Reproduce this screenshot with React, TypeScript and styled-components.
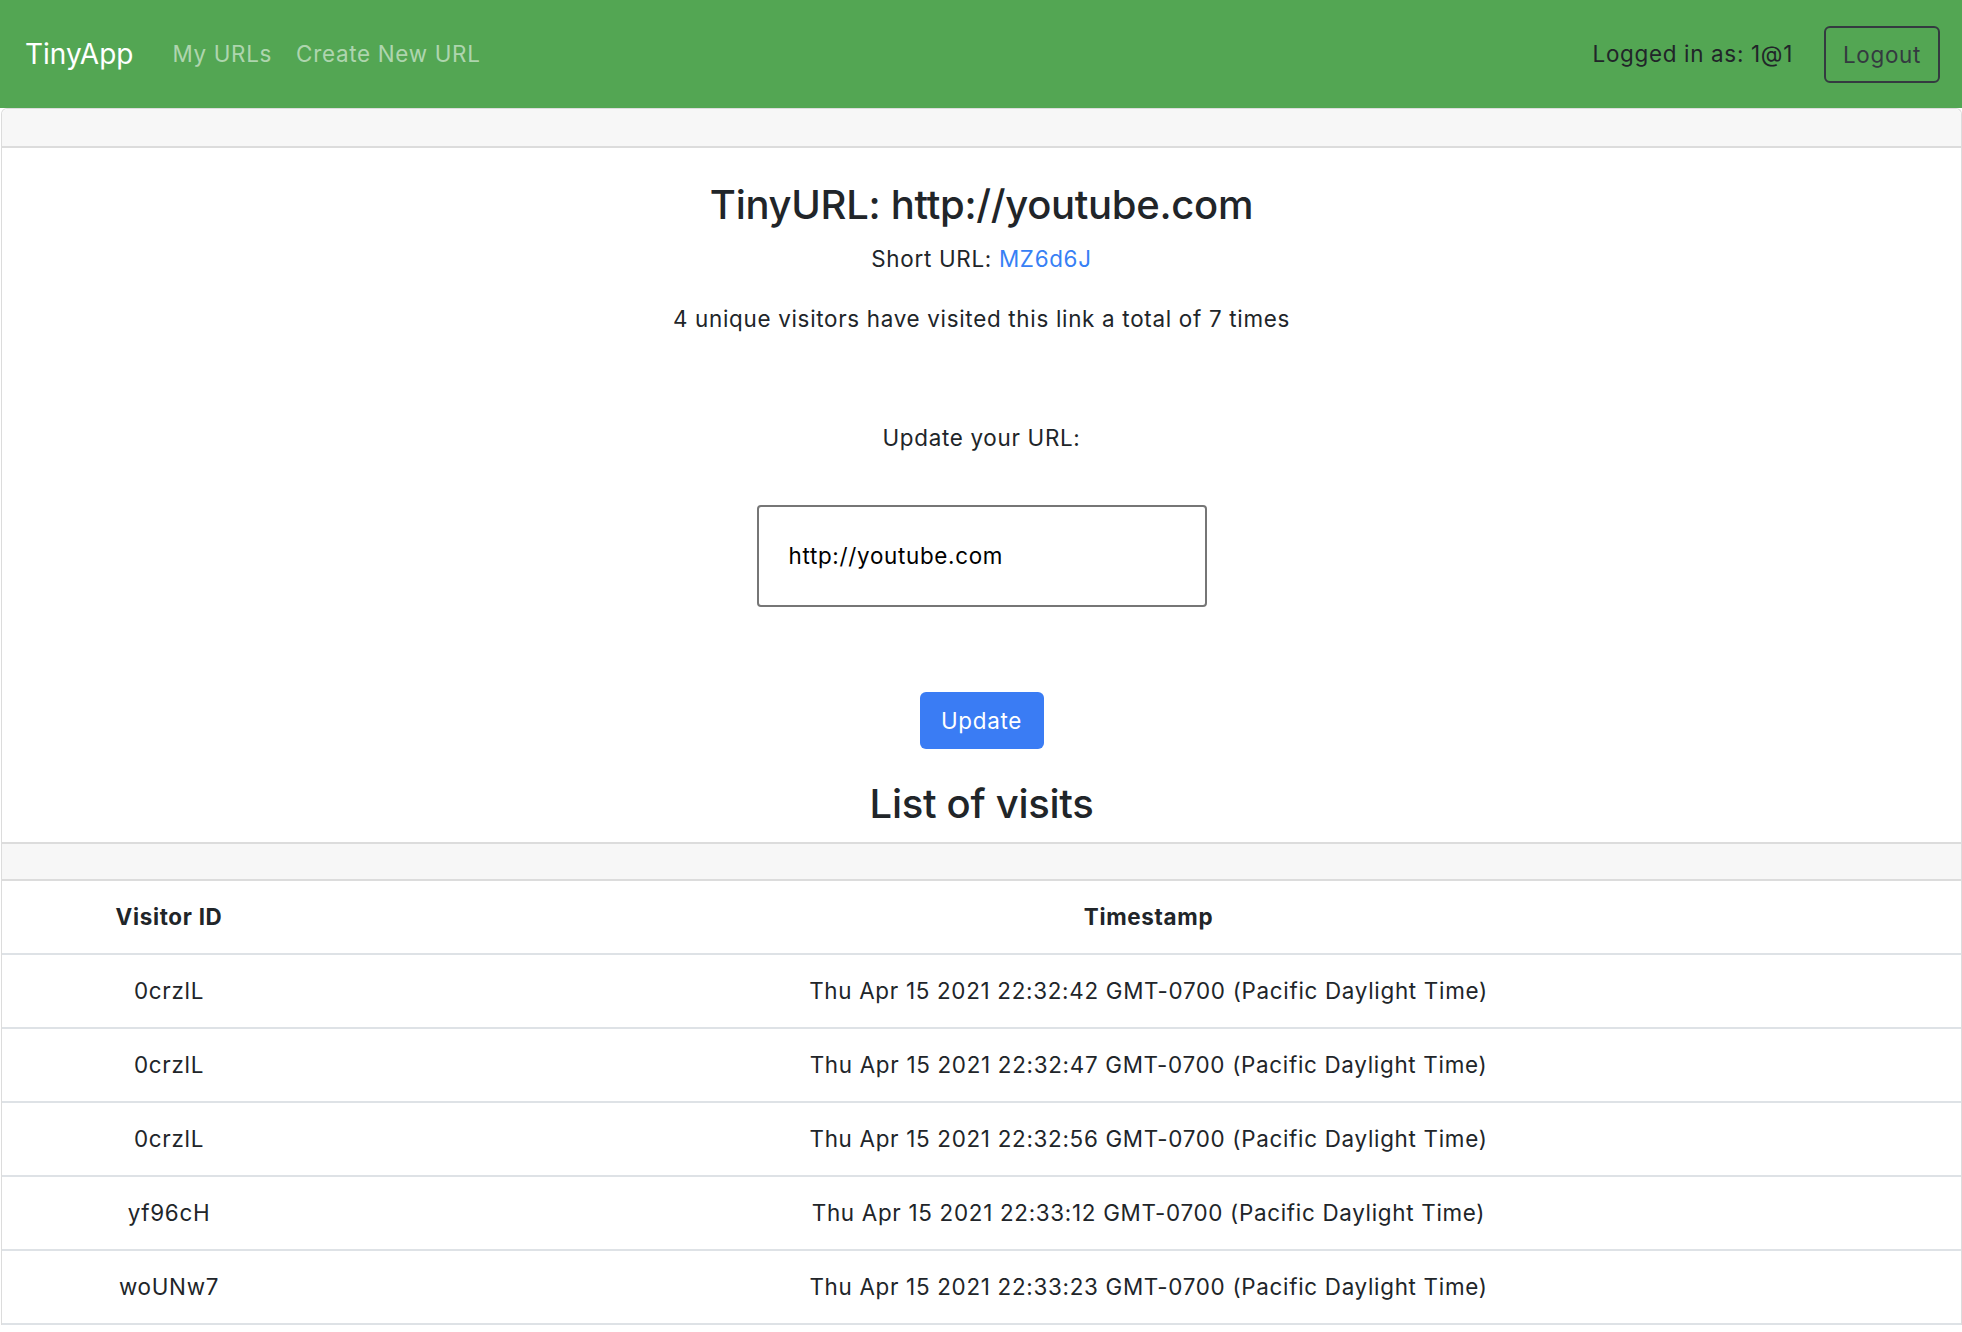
import React from "react";
import styled, { createGlobalStyle } from "styled-components";

const GlobalStyle = createGlobalStyle`
  * { box-sizing: border-box; }
  html, body {
    margin: 0;
    padding: 0;
    background: #ffffff;
    font-family: Inter, "Noto Sans", sans-serif;
    font-size: 22.4px;
    line-height: 1.5;
    letter-spacing: 0.7px;
    color: #212529;
  }
`;

interface visit {
  id: string,
  time: string
}

const visits: visit[] = [
  { id: "0crzlL", time: "Thu Apr 15 2021 22:32:42 GMT-0700 (Pacific Daylight Time)" },
  { id: "0crzlL", time: "Thu Apr 15 2021 22:32:47 GMT-0700 (Pacific Daylight Time)" },
  { id: "0crzlL", time: "Thu Apr 15 2021 22:32:56 GMT-0700 (Pacific Daylight Time)" },
  { id: "yf96cH", time: "Thu Apr 15 2021 22:33:12 GMT-0700 (Pacific Daylight Time)" },
  { id: "woUNw7", time: "Thu Apr 15 2021 22:33:23 GMT-0700 (Pacific Daylight Time)" },
];

export default function App () {
  return (
    <>
      <GlobalStyle />
      <NavBar>
        <Brand href="#">TinyApp</Brand>
        <NavLinks>
          <NavLink href="#">My URLs</NavLink>
          <NavLink href="#">Create New URL</NavLink>
        </NavLinks>
        <NavRight>
          <LoggedIn>Logged in as: 1@1</LoggedIn>
          <LogoutButton>Logout</LogoutButton>
        </NavRight>
      </NavBar>

      <Card>
        <CardHeader first />
        <CardBody>
          <Title>TinyURL: http://youtube.com</Title>
          <ShortLine>Short URL: <ShortLink href="#">MZ6d6J</ShortLink></ShortLine>
          <Visitors>4 unique visitors have visited this link a total of 7 times</Visitors>
          <UpdateForm>
            <FormLabel>Update your URL:</FormLabel>
            <UrlInput type="text" defaultValue="http://youtube.com" />
            <UpdateButton type="button">Update</UpdateButton>
          </UpdateForm>
          <ListTitle>List of visits</ListTitle>
        </CardBody>
        <CardHeader />
        <VisitTable>
          <thead>
            <tr>
              <HeadCell style={{ width: "334px" }}>Visitor ID</HeadCell>
              <HeadCell>Timestamp</HeadCell>
            </tr>
          </thead>
          <tbody>
            {visits.map((v, i) => (
              <tr key={i}>
                <Cell>{v.id}</Cell>
                <Cell>{v.time}</Cell>
              </tr>
            ))}
          </tbody>
        </VisitTable>
      </Card>
    </>
  )
}

const NavBar = styled.nav`
  height: 108px;
  background-color: #53a653;
  display: flex;
  align-items: center;
  padding: 0 22px 0 25px;
`

const Brand = styled.a`
  color: #ffffff;
  font-size: 28px;
  text-decoration: none;
  margin-right: 27px;
  letter-spacing: 0;
`

const NavLinks = styled.div`
  display: flex;
  align-items: center;
`

const NavLink = styled.a`
  color: rgba(255, 255, 255, 0.55);
  text-decoration: none;
  padding: 0 12px;
`

const NavRight = styled.div`
  margin-left: auto;
  display: flex;
  align-items: center;
  gap: 31px;
`

const LoggedIn = styled.span`
  color: #212529;
`

const LogoutButton = styled.button`
  font-family: inherit;
  font-size: 22.4px;
  line-height: 1.5;
  letter-spacing: 0.7px;
  color: #343a40;
  background: transparent;
  border: 2px solid #343a40;
  border-radius: 6px;
  padding: 10px 17px;
  height: 57px;
`

const Card = styled.div`
  border: 1px solid #dcdcdc;
  border-bottom: none;
  border-radius: 6px 6px 0 0;
  margin: 0 0 0 1px;
`

const CardHeader = styled.div<{ first?: boolean }>`
  height: 39px;
  background-color: #f7f7f7;
  border-top: ${props => props.first ? "none" : "2px solid #dcdcdc"};
  border-bottom: 2px solid #dcdcdc;
  ${props => props.first && { borderRadius: "6px 6px 0 0" }}
`

const CardBody = styled.div`
  display: flex;
  flex-direction: column;
  align-items: center;
  padding: 33px 0 11px;
  text-align: center;
`

const Title = styled.h3`
  margin: 0 0 13px;
  font-size: 40px;
  font-weight: 500;
  line-height: 1.2;
  letter-spacing: -0.3px;
`

const ShortLine = styled.p`
  margin: 0 0 26px;
`

const ShortLink = styled.a`
  color: #3780f5;
  text-decoration: none;
`

const Visitors = styled.p`
  margin: 0 0 86px;
`

const UpdateForm = styled.form`
  display: flex;
  flex-direction: column;
  align-items: center;
`

const FormLabel = styled.label`
  margin-bottom: 50px;
`

const UrlInput = styled.input`
  width: 450px;
  height: 102px;
  border: 2px solid #767676;
  border-radius: 4px;
  padding: 0 30px;
  font-family: Inter, "Noto Sans", sans-serif;
  font-size: 22.4px;
  letter-spacing: 0.7px;
  color: #000000;
  margin-bottom: 85px;
  outline: none;
`

const UpdateButton = styled.button`
  width: 124px;
  height: 57px;
  border: none;
  border-radius: 6px;
  background-color: #3a7cf4;
  color: #ffffff;
  font-family: inherit;
  font-size: 22.4px;
  letter-spacing: 0.7px;
  margin-bottom: 28px;
`

const ListTitle = styled.h2`
  margin: 0;
  font-size: 40px;
  font-weight: 500;
  line-height: 1.35;
  letter-spacing: -0.3px;
`

const VisitTable = styled.table`
  width: 100%;
  border-collapse: collapse;
  table-layout: fixed;
`

const HeadCell = styled.th`
  font-weight: 700;
  text-align: center;
  height: 73px;
  border-bottom: 2px solid #dee2e6;
  padding: 0;
`

const Cell = styled.td`
  text-align: center;
  height: 74px;
  border-bottom: 2px solid #dee2e6;
  padding: 0;
`
